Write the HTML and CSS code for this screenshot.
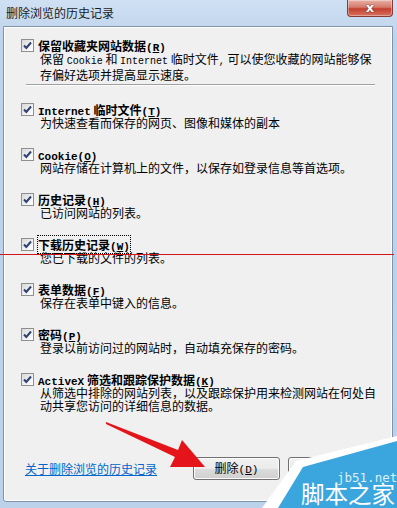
FILE: index.html
```html
<!DOCTYPE html>
<html lang="zh-CN">
<head>
<meta charset="utf-8">
<title>删除浏览的历史记录</title>
<link rel="stylesheet" href="styles.css">
</head>
<body>
<div class="win">
  <div class="titlebar">
    <span class="title">删除浏览的历史记录</span>
    <div class="close"><span>x</span></div>
  </div>
  <div class="panel">
    <div class="item">
      <span class="cb"><svg viewBox="0 0 11 11" width="11" height="11"><path d="M2 5.5 L4.3 8 L9 2.5" fill="none" stroke="#2c4273" stroke-width="2"/></svg></span>
      <div class="txt">
        <div class="ttl">保留收藏夹网站数据<span class="tl">(<u>R</u>)</span></div>
        <div class="desc">保留 <span class="lt">Cookie</span> 和 <span class="lt">Internet</span> 临时文件<span class="lt">,</span> 可以使您收藏的网站能够保<br>存偏好选项并提高显示速度。</div>
      </div>
    </div>
    <div class="sep"></div>
    <div class="item">
      <span class="cb"><svg viewBox="0 0 11 11" width="11" height="11"><path d="M2 5.5 L4.3 8 L9 2.5" fill="none" stroke="#2c4273" stroke-width="2"/></svg></span>
      <div class="txt">
        <div class="ttl"><span class="tl">Internet</span> 临时文件<span class="tl">(<u>T</u>)</span></div>
        <div class="desc">为快速查看而保存的网页、图像和媒体的副本</div>
      </div>
    </div>
    <div class="item">
      <span class="cb"><svg viewBox="0 0 11 11" width="11" height="11"><path d="M2 5.5 L4.3 8 L9 2.5" fill="none" stroke="#2c4273" stroke-width="2"/></svg></span>
      <div class="txt">
        <div class="ttl"><span class="tl">Cookie(<u>O</u>)</span></div>
        <div class="desc">网站存储在计算机上的文件，以保存如登录信息等首选项。</div>
      </div>
    </div>
    <div class="item">
      <span class="cb"><svg viewBox="0 0 11 11" width="11" height="11"><path d="M2 5.5 L4.3 8 L9 2.5" fill="none" stroke="#2c4273" stroke-width="2"/></svg></span>
      <div class="txt">
        <div class="ttl">历史记录<span class="tl">(<u>H</u>)</span></div>
        <div class="desc">已访问网站的列表。</div>
      </div>
    </div>
    <div class="item">
      <span class="cb"><svg viewBox="0 0 11 11" width="11" height="11"><path d="M2 5.5 L4.3 8 L9 2.5" fill="none" stroke="#2c4273" stroke-width="2"/></svg></span>
      <div class="txt">
        <div class="ttl"><span class="focus">下载历史记录<span class="tl">(<u>W</u>)</span></span></div>
        <div class="desc">您已下载的文件的列表。</div>
      </div>
    </div>
    <div class="item">
      <span class="cb"><svg viewBox="0 0 11 11" width="11" height="11"><path d="M2 5.5 L4.3 8 L9 2.5" fill="none" stroke="#2c4273" stroke-width="2"/></svg></span>
      <div class="txt">
        <div class="ttl">表单数据<span class="tl">(<u>F</u>)</span></div>
        <div class="desc">保存在表单中键入的信息。</div>
      </div>
    </div>
    <div class="item">
      <span class="cb"><svg viewBox="0 0 11 11" width="11" height="11"><path d="M2 5.5 L4.3 8 L9 2.5" fill="none" stroke="#2c4273" stroke-width="2"/></svg></span>
      <div class="txt">
        <div class="ttl">密码<span class="tl">(<u>P</u>)</span></div>
        <div class="desc">登录以前访问过的网站时，自动填充保存的密码。</div>
      </div>
    </div>
    <div class="item">
      <span class="cb"><svg viewBox="0 0 11 11" width="11" height="11"><path d="M2 5.5 L4.3 8 L9 2.5" fill="none" stroke="#2c4273" stroke-width="2"/></svg></span>
      <div class="txt">
        <div class="ttl"><span class="tl">ActiveX</span> 筛选和跟踪保护数据<span class="tl">(<u>K</u>)</span></div>
        <div class="desc">从筛选中排除的网站列表，以及跟踪保护用来检测网站在何处自<br>动共享您访问的详细信息的数据。</div>
      </div>
    </div>
    <div class="footer">
      <a class="link" href="#">关于删除浏览的历史记录</a>
      <div class="btns">
        <button class="btn">删除<span class="bl">(<u>D</u>)</span></button>
        <button class="btn">取消</button>
      </div>
    </div>
  </div>

  <div class="redline"></div>

  <svg class="arrow" width="397" height="508" viewBox="0 0 397 508">
    <polygon points="106,422 178,450 182,440 205,467 170,467 175,457 106,424" fill="#e5141b"/>
  </svg>

  <svg class="mark" width="140" height="76" viewBox="257 432 140 76">
    <polygon points="262,508 296,461 397,436 397,508" fill="#ffffff"/>
    <polygon points="278,508 303,467 397,441 397,508" fill="#3aa6dd"/>
    <text x="337" y="482" font-family="DejaVu Sans Mono" font-size="12.5" fill="#d9f0fb">jb51.net</text>
    <text x="301" y="503" font-family="Noto Sans CJK SC" font-size="23.5" fill="#ffffff">脚本之家</text>
  </svg>
</div>
</body>
</html>
```

FILE: styles.css
```css
* { box-sizing: border-box; }
html, body { margin: 0; padding: 0; }
body {
  width: 397px;
  height: 508px;
  overflow: hidden;
  font-family: "Noto Sans CJK SC", sans-serif;
  font-size: 12px;
  line-height: 13px;
  color: #000;
}
.win {
  position: relative;
  width: 397px;
  height: 508px;
  background: linear-gradient(180deg, #cfe0f3 0%, #bdd3eb 40px, #bcd2ea 100%);
  display: flex;
  flex-direction: column;
}
.titlebar {
  height: 26px;
  display: flex;
  justify-content: space-between;
  align-items: flex-start;
  padding: 0 4px 0 6px;
}
.title {
  padding-top: 6px;
  line-height: 14px;
  color: #1b1b1b;
}
.close {
  width: 46px;
  height: 17px;
  border: 1px solid #8a3a32;
  border-top: none;
  border-radius: 0 0 4px 4px;
  background: linear-gradient(180deg, #e8b2a6 0%, #d47a6b 45%, #c3402f 55%, #d5735f 100%);
  display: flex;
  justify-content: center;
  align-items: center;
  box-shadow: inset 0 0 0 1px rgba(255,255,255,0.35);
}
.close span {
  font-family: "DejaVu Sans", sans-serif;
  font-weight: bold;
  font-size: 13px;
  line-height: 13px;
  color: #fff;
  text-shadow: 0 0 1px #5a1d18, 0 0 1px #5a1d18;
  margin-top: -2px;
}
.panel {
  margin: 0 4px 6px 3px;
  flex: 1;
  background: #f0f0f0;
  border: 1px solid #7f93ac;
  border-radius: 0 0 3px 3px;
  box-shadow: inset 0 0 0 1px #ffffff;
  padding: 12px 17px 0 17px;
  display: flex;
  flex-direction: column;
}
.item {
  display: flex;
  align-items: flex-start;
  margin-bottom: 19px;
}
.cb {
  width: 13px;
  height: 13px;
  flex: none;
  margin-top: 0;
  border: 1px solid #8e8f8f;
  background: linear-gradient(135deg, #d8d8d8 0%, #f6f6f6 70%, #ffffff 100%);
  display: flex;
  justify-content: center;
  align-items: center;
}
.cb svg { display: block; }
.txt {
  margin-left: 4px;
}
.ttl {
  font-weight: bold;
  height: 13px;
  white-space: nowrap;
}
.desc {
  padding-left: 2px;
  white-space: nowrap;
}
.tl {
  font-family: "Liberation Mono", monospace;
  font-size: 11px;
  font-weight: bold;
}
.lt {
  font-family: "Liberation Mono", monospace;
  font-size: 10px;
}
.focus {
  outline: 1px dotted #000;
  outline-offset: 0px;
}
.sep {
  margin: -8px 0 17px 5px;
  width: 349px;
  height: 2px;
  border-top: 1px solid #a0a0a0;
  border-bottom: 1px solid #ffffff;
}
.item:first-child { margin-bottom: 11px; }
.footer {
  margin-top: 26px;
  display: flex;
  align-items: center;
  height: 23px;
}
.link {
  margin-left: 4px;
  color: #0066cc;
  text-decoration: underline;
}
.btns {
  margin-left: auto;
  display: flex;
  gap: 8px;
}
.btn {
  width: 87px;
  height: 23px;
  padding: 0;
  font-family: "Noto Sans CJK SC", sans-serif;
  font-size: 12px;
  line-height: 13px;
  color: #000;
  border: 1px solid #707070;
  border-radius: 3px;
  background: linear-gradient(180deg, #f2f2f2 0%, #ebebeb 50%, #dddddd 51%, #cfcfcf 100%);
  box-shadow: inset 0 0 0 1px #fcfcfc;
}
.bl {
  font-family: "Liberation Mono", monospace;
  font-size: 11px;
}
.redline {
  position: absolute;
  left: 0;
  top: 254px;
  width: 394px;
  height: 1px;
  background: #d3141b;
}
.arrow {
  position: absolute;
  left: 0;
  top: 0;
  pointer-events: none;
}
.mark {
  position: absolute;
  right: 0;
  bottom: 0;
}
```
